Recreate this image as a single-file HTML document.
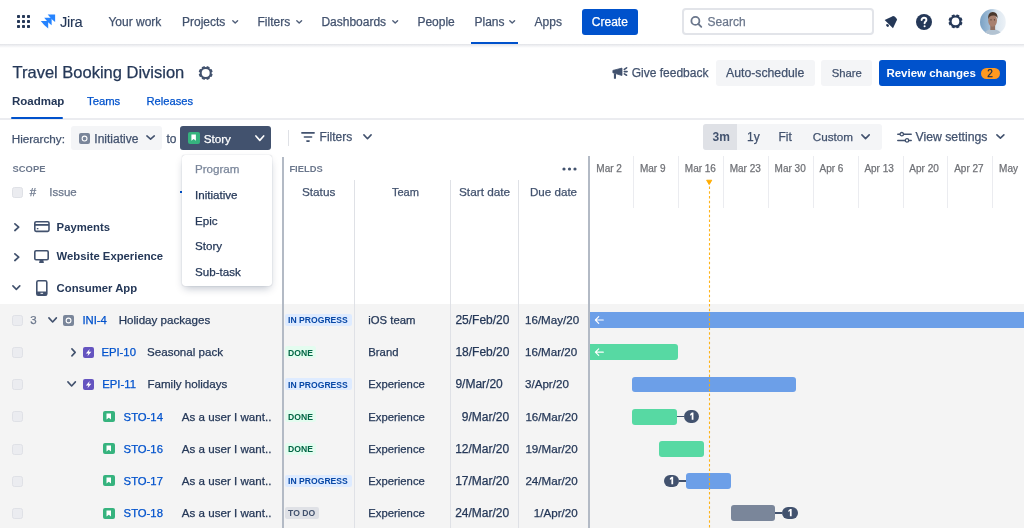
<!DOCTYPE html>
<html><head><meta charset="utf-8">
<style>
*{box-sizing:border-box;margin:0;padding:0}
html,body{width:1024px;height:528px;overflow:hidden;background:#fff;font-family:"Liberation Sans",sans-serif;color:#172B4D}
.a{position:absolute;white-space:nowrap}
.t{position:absolute;white-space:nowrap;line-height:1}
.s{-webkit-text-stroke:0.25px currentColor}
svg{position:absolute;overflow:visible}
</style></head><body>
<div id="root" style="position:absolute;left:0;top:0;width:1024px;height:528px;background:#fff;will-change:transform;overflow:hidden">
<div class="a" style="left:0px;top:44px;width:1024px;height:3.5px;background:linear-gradient(to bottom,#E1E3E7 0,#EDEEF1 35%,#FAFAFB 80%,#fff 100%);"></div>
<svg style="left:17px;top:15.2px" width="13" height="13"><g fill="#253858"><rect x="0" y="0" width="3" height="3" rx=".7"/><rect x="5" y="0" width="3" height="3" rx=".7"/><rect x="10" y="0" width="3" height="3" rx=".7"/><rect x="0" y="5" width="3" height="3" rx=".7"/><rect x="5" y="5" width="3" height="3" rx=".7"/><rect x="10" y="5" width="3" height="3" rx=".7"/><rect x="0" y="10" width="3" height="3" rx=".7"/><rect x="5" y="10" width="3" height="3" rx=".7"/><rect x="10" y="10" width="3" height="3" rx=".7"/></g></svg>
<svg style="left:41px;top:14.2px" width="15" height="15" viewBox="0 0 15 15"><path d="M6.7 0.4 h7.4 v7.6 Q10.100000000000001 5.0 6.7 0.4 z" fill="#2684FF"/><path d="M3.1999999999999997 3.7 h7.4 v7.6 Q6.6 8.3 3.1999999999999997 3.7 z" fill="#2684FF"/><path d="M-0.2 7.0 h7.4 v7.6 Q3.2 11.6 -0.2 7.0 z" fill="#2684FF"/></svg>
<div class="t s" style="left:60px;top:15px;font-size:14.7px;font-weight:400;color:#253858;letter-spacing:-0.3px;-webkit-text-stroke:0.1px currentColor">Jira</div>
<div class="t s" style="left:108.4px;top:16px;font-size:12px;font-weight:400;color:#42526E;">Your work</div>
<div class="t s" style="left:182px;top:16px;font-size:12px;font-weight:400;color:#42526E;">Projects</div>
<div class="t s" style="left:257.5px;top:16px;font-size:12px;font-weight:400;color:#42526E;">Filters</div>
<div class="t s" style="left:321.4px;top:16px;font-size:12px;font-weight:400;color:#42526E;">Dashboards</div>
<div class="t s" style="left:417.4px;top:16px;font-size:12px;font-weight:400;color:#42526E;">People</div>
<div class="t s" style="left:474.5px;top:16px;font-size:12px;font-weight:400;color:#42526E;">Plans</div>
<div class="t s" style="left:534.6px;top:16px;font-size:12px;font-weight:400;color:#42526E;">Apps</div>
<svg style="left:231.6px;top:20px" width="6.4" height="4" viewBox="0 0 6.4 4"><path d="M0.8 0.8L3.2 3.1L5.6 0.8" fill="none" stroke="#505F79" stroke-width="1.4" stroke-linecap="round" stroke-linejoin="round"/></svg>
<svg style="left:296px;top:20px" width="6.4" height="4" viewBox="0 0 6.4 4"><path d="M0.8 0.8L3.2 3.1L5.6 0.8" fill="none" stroke="#505F79" stroke-width="1.4" stroke-linecap="round" stroke-linejoin="round"/></svg>
<svg style="left:391.5px;top:20px" width="6.4" height="4" viewBox="0 0 6.4 4"><path d="M0.8 0.8L3.2 3.1L5.6 0.8" fill="none" stroke="#505F79" stroke-width="1.4" stroke-linecap="round" stroke-linejoin="round"/></svg>
<svg style="left:509px;top:20px" width="6.4" height="4" viewBox="0 0 6.4 4"><path d="M0.8 0.8L3.2 3.1L5.6 0.8" fill="none" stroke="#505F79" stroke-width="1.4" stroke-linecap="round" stroke-linejoin="round"/></svg>
<div class="a" style="left:471px;top:41.5px;width:47px;height:2.5px;background:#0052CC;"></div>
<div class="a" style="left:581.5px;top:9px;width:56px;height:25.5px;background:#0052CC;border-radius:3px"></div>
<div class="t s" style="left:591.8px;top:16px;font-size:12px;font-weight:400;color:#fff;">Create</div>
<div class="a" style="left:682px;top:8px;width:192px;height:26.8px;background:#fff;border:2px solid #E2E4E9;border-radius:4px"></div>
<svg style="left:0;top:0" width="1024" height="60"><circle cx="695.4" cy="20.9" r="4.0" fill="none" stroke="#6B778C" stroke-width="1.8"/><path d="M698.4 24l2.9 2.8" stroke="#6B778C" stroke-width="1.8" stroke-linecap="round"/></svg>
<div class="t s" style="left:707.6px;top:16px;font-size:12px;font-weight:400;color:#6B778C;">Search</div>
<svg style="left:884px;top:14px" width="15" height="15" viewBox="0 0 15 15"><g transform="rotate(45 7.5 7.5)" fill="#253858"><path d="M4.2 4 Q4.2 1.8 6.3 1.8 H8.7 Q10.8 1.8 10.8 4 L13.4 11.3 H1.6 Z"/><ellipse cx="7.5" cy="13.1" rx="1.6" ry="1.2"/></g></svg>
<svg style="left:915.8px;top:13.8px" width="16" height="16" viewBox="0 0 16 16"><circle cx="8" cy="8" r="8" fill="#253858"/><path d="M5.6 6.1c0-1.4 1.1-2.3 2.4-2.3s2.4.9 2.4 2.1c0 1.5-1.8 1.7-1.8 3.3" fill="none" stroke="#fff" stroke-width="1.9" stroke-linecap="round"/><circle cx="8.6" cy="12.2" r="1.05" fill="#fff"/></svg>
<svg style="left:0;top:0" width="1024" height="60"><circle cx="955.5" cy="21.4" r="6.0" fill="#253858"/><rect x="953.9" y="14.399999999999999" width="3.2" height="7.0" rx="0.6" fill="#253858" transform="rotate(22.5 955.5 21.4)"/><rect x="953.9" y="14.399999999999999" width="3.2" height="7.0" rx="0.6" fill="#253858" transform="rotate(67.5 955.5 21.4)"/><rect x="953.9" y="14.399999999999999" width="3.2" height="7.0" rx="0.6" fill="#253858" transform="rotate(112.5 955.5 21.4)"/><rect x="953.9" y="14.399999999999999" width="3.2" height="7.0" rx="0.6" fill="#253858" transform="rotate(157.5 955.5 21.4)"/><rect x="953.9" y="14.399999999999999" width="3.2" height="7.0" rx="0.6" fill="#253858" transform="rotate(202.5 955.5 21.4)"/><rect x="953.9" y="14.399999999999999" width="3.2" height="7.0" rx="0.6" fill="#253858" transform="rotate(247.5 955.5 21.4)"/><rect x="953.9" y="14.399999999999999" width="3.2" height="7.0" rx="0.6" fill="#253858" transform="rotate(292.5 955.5 21.4)"/><rect x="953.9" y="14.399999999999999" width="3.2" height="7.0" rx="0.6" fill="#253858" transform="rotate(337.5 955.5 21.4)"/><circle cx="955.5" cy="21.4" r="3.8" fill="#fff"/></svg>
<svg style="left:980px;top:9px" width="26" height="26" viewBox="0 0 26 26"><defs><clipPath id="av"><circle cx="12.9" cy="12.9" r="12.9"/></clipPath>
<linearGradient id="avbg" x1="0" y1="0" x2="1" y2="0"><stop offset="0" stop-color="#7aa1c4"/><stop offset="0.35" stop-color="#9dbbd6"/><stop offset="0.62" stop-color="#dbe6ef"/><stop offset="1" stop-color="#edf2f7"/></linearGradient></defs>
<g clip-path="url(#av)"><rect width="26" height="26" fill="url(#avbg)"/>
<path d="M3 26 Q5.5 20.5 12.5 20 Q19.5 20.5 22.5 26 Z" fill="#b3c3d2"/>
<rect x="10.3" y="15.5" width="4.8" height="5.5" fill="#8f6f61"/>
<ellipse cx="12.6" cy="11.6" rx="4.4" ry="6.1" fill="#a7806f"/>
<path d="M8 10.5 Q7.6 3.2 12.8 3 Q18 3 17.6 10 Q17 6.4 13.2 6.5 Q9.2 6.6 8 10.5z" fill="#4a382d"/>
<circle cx="11" cy="10.8" r=".6" fill="#3b2c25"/><circle cx="14.4" cy="10.8" r=".6" fill="#3b2c25"/>
</g></svg>
<div class="t s" style="left:12.5px;top:64px;font-size:16.5px;font-weight:400;color:#253858;">Travel Booking Division</div>
<svg style="left:0;top:0" width="300" height="100"><circle cx="205.7" cy="73.0" r="6.0" fill="#42526E"/><rect x="204.1" y="66.0" width="3.2" height="7.0" rx="0.6" fill="#42526E" transform="rotate(22.5 205.7 73.0)"/><rect x="204.1" y="66.0" width="3.2" height="7.0" rx="0.6" fill="#42526E" transform="rotate(67.5 205.7 73.0)"/><rect x="204.1" y="66.0" width="3.2" height="7.0" rx="0.6" fill="#42526E" transform="rotate(112.5 205.7 73.0)"/><rect x="204.1" y="66.0" width="3.2" height="7.0" rx="0.6" fill="#42526E" transform="rotate(157.5 205.7 73.0)"/><rect x="204.1" y="66.0" width="3.2" height="7.0" rx="0.6" fill="#42526E" transform="rotate(202.5 205.7 73.0)"/><rect x="204.1" y="66.0" width="3.2" height="7.0" rx="0.6" fill="#42526E" transform="rotate(247.5 205.7 73.0)"/><rect x="204.1" y="66.0" width="3.2" height="7.0" rx="0.6" fill="#42526E" transform="rotate(292.5 205.7 73.0)"/><rect x="204.1" y="66.0" width="3.2" height="7.0" rx="0.6" fill="#42526E" transform="rotate(337.5 205.7 73.0)"/><circle cx="205.7" cy="73.0" r="4.0" fill="#fff"/></svg>
<div class="t" style="left:12px;top:96px;font-size:11.5px;font-weight:700;color:#253858;">Roadmap</div>
<div class="t s" style="left:87px;top:96px;font-size:11.3px;font-weight:400;color:#0052CC;">Teams</div>
<div class="t s" style="left:146.5px;top:96px;font-size:11.2px;font-weight:400;color:#0052CC;">Releases</div>
<div class="a" style="left:0px;top:118px;width:1024px;height:2px;background:#EBECF0;"></div>
<div class="a" style="left:11.3px;top:116.9px;width:51.7px;height:2.1px;background:#0052CC;border-radius:1px"></div>
<svg style="left:608px;top:62px" width="24" height="20" viewBox="0 0 24 20"><path d="M4.9 8.4L14 6.1v7.4L4.9 10.8z" fill="#42526E" stroke="#42526E" stroke-width="0.8" stroke-linejoin="round"/><rect x="5.9" y="11.5" width="2.1" height="5.3" rx="0.5" fill="#42526E"/><path d="M16.3 7.3l2.3-1.5M16.3 9.6h2.8M16.3 11.9l2.3 1.3" stroke="#42526E" stroke-width="1.6" stroke-linecap="round"/></svg>
<div class="t s" style="left:631.7px;top:67px;font-size:12px;font-weight:400;color:#42526E;">Give feedback</div>
<div class="a" style="left:715.7px;top:60.1px;width:99.2px;height:25.7px;background:#F4F5F7;border-radius:3px"></div>
<div class="t s" style="left:726px;top:67px;font-size:12.25px;font-weight:400;color:#42526E;">Auto-schedule</div>
<div class="a" style="left:821.2px;top:60.3px;width:51px;height:25.4px;background:#F4F5F7;border-radius:3px"></div>
<div class="t s" style="left:831.7px;top:68px;font-size:11.3px;font-weight:400;color:#42526E;">Share</div>
<div class="a" style="left:879.2px;top:59.8px;width:126.4px;height:25.8px;background:#0052CC;border-radius:3px"></div>
<div class="t" style="left:886.4px;top:68px;font-size:11.5px;font-weight:700;color:#fff;">Review changes</div>
<div class="a" style="left:980.5px;top:67.6px;width:19.2px;height:11.4px;background:#FF991F;border-radius:6px"></div>
<div class="t s" style="left:987.3px;top:69px;font-size:10px;font-weight:400;color:#172B4D;">2</div>
<div class="t s" style="left:11.7px;top:133px;font-size:11.7px;font-weight:400;color:#42526E;">Hierarchy:</div>
<div class="a" style="left:70.7px;top:126px;width:91px;height:23.7px;background:#F4F5F7;border-radius:3px"></div>
<div class="a" style="left:78.7px;top:132.5px;width:11.1px;height:11.1px;background:#7A869A;border-radius:2px"></div>
<svg style="left:78.7px;top:132.5px" width="11.1" height="11.1"><circle cx="5.55" cy="5.55" r="2.4" fill="none" stroke="#fff" stroke-width="1.1"/></svg>
<div class="t s" style="left:94.3px;top:133px;font-size:12px;font-weight:400;color:#42526E;">Initiative</div>
<svg style="left:145.5px;top:135.4px" width="9.2" height="5" viewBox="0 0 9.2 5"><path d="M0.9 0.9L4.6 4.1L8.299999999999999 0.9" fill="none" stroke="#42526E" stroke-width="1.6" stroke-linecap="round" stroke-linejoin="round"/></svg>
<div class="t s" style="left:166.4px;top:133px;font-size:12px;font-weight:400;color:#42526E;">to</div>
<div class="a" style="left:180.1px;top:126.3px;width:91.3px;height:23.6px;background:#42526E;border-radius:3px"></div>
<div class="a" style="left:188.3px;top:132.4px;width:11.3px;height:11.3px;background:#36B37E;border-radius:2px"></div>
<svg style="left:188.3px;top:132.4px" width="11.3" height="11.3" viewBox="0 0 11.3 11.3"><path d="M3.4 2.6h4.5v6.2L5.65 7.1 3.4 8.8z" fill="#fff"/></svg>
<div class="t s" style="left:203.7px;top:133px;font-size:11.7px;font-weight:400;color:#fff;">Story</div>
<svg style="left:255px;top:134.9px" width="9.6" height="6.3" viewBox="0 0 9.6 6.3"><path d="M0.9 0.9L4.8 5.3999999999999995L8.7 0.9" fill="none" stroke="#fff" stroke-width="1.6" stroke-linecap="round" stroke-linejoin="round"/></svg>
<div class="a" style="left:288px;top:129.8px;width:1.2px;height:16px;background:#DFE1E6;"></div>
<svg style="left:300.7px;top:132px" width="14" height="10" viewBox="0 0 14 10"><path d="M0.9 0.9h12.2M3.4 5h7.2M5.9 9.1h2.2" stroke="#42526E" stroke-width="1.6" stroke-linecap="round"/></svg>
<div class="t s" style="left:319.6px;top:131px;font-size:12px;font-weight:400;color:#42526E;">Filters</div>
<svg style="left:363.3px;top:134px" width="9" height="5.6" viewBox="0 0 9 5.6"><path d="M0.9 0.9L4.5 4.699999999999999L8.1 0.9" fill="none" stroke="#42526E" stroke-width="1.6" stroke-linecap="round" stroke-linejoin="round"/></svg>
<div class="a" style="left:702.8px;top:124.2px;width:179.2px;height:25.5px;background:#F4F5F7;border-radius:3px"></div>
<div class="a" style="left:702.8px;top:124.2px;width:34.3px;height:25.5px;background:#DFE1E6;border-radius:3px 0 0 3px"></div>
<div class="t" style="left:712.6px;top:131px;font-size:12px;font-weight:700;color:#42526E;">3m</div>
<div class="t s" style="left:747px;top:131px;font-size:12px;font-weight:400;color:#42526E;">1y</div>
<div class="t s" style="left:778.5px;top:131px;font-size:12px;font-weight:400;color:#42526E;">Fit</div>
<div class="t s" style="left:812.8px;top:131px;font-size:11.7px;font-weight:400;color:#42526E;">Custom</div>
<svg style="left:860.7px;top:134.4px" width="9.1" height="5.5" viewBox="0 0 9.1 5.5"><path d="M0.9 0.9L4.55 4.6L8.2 0.9" fill="none" stroke="#42526E" stroke-width="1.6" stroke-linecap="round" stroke-linejoin="round"/></svg>
<svg style="left:896.5px;top:132px" width="15" height="11" viewBox="0 0 15 11"><path d="M0.8 2.2h13.4M0.8 8.4h13.4" stroke="#42526E" stroke-width="1.5" stroke-linecap="round"/><circle cx="4.8" cy="2.2" r="1.7" fill="#fff" stroke="#42526E" stroke-width="1.3"/><circle cx="10" cy="8.4" r="1.7" fill="#fff" stroke="#42526E" stroke-width="1.3"/></svg>
<div class="t s" style="left:915.5px;top:131px;font-size:12.25px;font-weight:400;color:#42526E;">View settings</div>
<svg style="left:996.3px;top:134.3px" width="8.8" height="5.1" viewBox="0 0 8.8 5.1"><path d="M0.9 0.9L4.4 4.199999999999999L7.9 0.9" fill="none" stroke="#42526E" stroke-width="1.6" stroke-linecap="round" stroke-linejoin="round"/></svg>
<div class="a" style="left:0px;top:304px;width:1024px;height:224px;background:#F4F4F4;"></div>
<div class="t" style="left:12.6px;top:164px;font-size:9.4px;font-weight:700;color:#6B778C;">SCOPE</div>
<div class="a" style="left:11.5px;top:186.5px;width:11px;height:11px;background:#EBECF0;border:1px solid #DFE1E6;border-radius:2.5px"></div>
<div class="t s" style="left:29.7px;top:187px;font-size:11.5px;font-weight:400;color:#6B778C;">#</div>
<div class="t s" style="left:49.2px;top:187px;font-size:11.5px;font-weight:400;color:#6B778C;">Issue</div>
<div class="a" style="left:180px;top:191px;width:2px;height:1.5px;background:#0052CC;"></div>
<div class="t" style="left:289.4px;top:164px;font-size:9.4px;font-weight:700;color:#6B778C;">FIELDS</div>
<svg style="left:562px;top:167px" width="15" height="4"><circle cx="2" cy="2" r="1.6" fill="#42526E"/><circle cx="7.5" cy="2" r="1.6" fill="#42526E"/><circle cx="13" cy="2" r="1.6" fill="#42526E"/></svg>
<div class="t s" style="left:301.9px;top:187px;font-size:11.8px;font-weight:400;color:#42526E;">Status</div>
<div class="t s" style="left:391.9px;top:187px;font-size:11.1px;font-weight:400;color:#42526E;">Team</div>
<div class="t s" style="left:459px;top:187px;font-size:11.8px;font-weight:400;color:#42526E;">Start date</div>
<div class="t s" style="left:530px;top:186px;font-size:11.6px;font-weight:400;color:#42526E;">Due date</div>
<div class="a" style="left:354px;top:180px;width:1px;height:348px;background:#DFE1E6;"></div>
<div class="a" style="left:450px;top:180px;width:1px;height:348px;background:#DFE1E6;"></div>
<div class="a" style="left:518px;top:180px;width:1px;height:348px;background:#DFE1E6;"></div>
<div class="a" style="left:633.1px;top:156px;width:1px;height:52px;background:#EBECF0;"></div>
<div class="a" style="left:678.0px;top:156px;width:1px;height:52px;background:#EBECF0;"></div>
<div class="a" style="left:722.9px;top:156px;width:1px;height:52px;background:#EBECF0;"></div>
<div class="a" style="left:767.8px;top:156px;width:1px;height:52px;background:#EBECF0;"></div>
<div class="a" style="left:812.7px;top:156px;width:1px;height:52px;background:#EBECF0;"></div>
<div class="a" style="left:857.6px;top:156px;width:1px;height:52px;background:#EBECF0;"></div>
<div class="a" style="left:902.5px;top:156px;width:1px;height:52px;background:#EBECF0;"></div>
<div class="a" style="left:947.4px;top:156px;width:1px;height:52px;background:#EBECF0;"></div>
<div class="a" style="left:992.3px;top:156px;width:1px;height:52px;background:#EBECF0;"></div>
<div class="a" style="left:282px;top:157px;width:2px;height:371px;background:#B3BAC5;"></div>
<div class="a" style="left:588px;top:156px;width:2px;height:372px;background:#B3BAC5;"></div>
<div class="t s" style="left:596.3px;top:164px;font-size:10px;font-weight:400;color:#707277;">Mar 2</div>
<div class="t s" style="left:639.9px;top:164px;font-size:10px;font-weight:400;color:#707277;">Mar 9</div>
<div class="t s" style="left:684.8px;top:164px;font-size:10px;font-weight:400;color:#707277;">Mar 16</div>
<div class="t s" style="left:729.7px;top:164px;font-size:10px;font-weight:400;color:#707277;">Mar 23</div>
<div class="t s" style="left:774.6px;top:164px;font-size:10px;font-weight:400;color:#707277;">Mar 30</div>
<div class="t s" style="left:819.5px;top:164px;font-size:10px;font-weight:400;color:#707277;">Apr 6</div>
<div class="t s" style="left:864.4px;top:164px;font-size:10px;font-weight:400;color:#707277;">Apr 13</div>
<div class="t s" style="left:909.3px;top:164px;font-size:10px;font-weight:400;color:#707277;">Apr 20</div>
<div class="t s" style="left:954.2px;top:164px;font-size:10px;font-weight:400;color:#707277;">Apr 27</div>
<div class="t s" style="left:999.1px;top:164px;font-size:10px;font-weight:400;color:#707277;">May</div>
<svg style="left:13.8px;top:223.3px" width="5.6" height="8.4" viewBox="0 0 5.6 8.4"><path d="M0.9 0.9L4.699999999999999 4.2L0.9 7.5" fill="none" stroke="#42526E" stroke-width="1.7" stroke-linecap="round" stroke-linejoin="round"/></svg>
<svg style="left:34px;top:221.4px" width="16" height="11.2" viewBox="0 0 16 11.2"><rect x="0.8" y="0.8" width="14.2" height="9.6" rx="1.3" fill="none" stroke="#42526E" stroke-width="1.6"/><rect x="0.8" y="3" width="14.2" height="1.8" fill="#42526E"/><rect x="2.8" y="7" width="1.6" height="1.3" fill="#42526E"/></svg>
<div class="t" style="left:56.6px;top:222px;font-size:11.3px;font-weight:700;color:#253858;">Payments</div>
<svg style="left:13.8px;top:252.6px" width="5.6" height="8.4" viewBox="0 0 5.6 8.4"><path d="M0.9 0.9L4.699999999999999 4.2L0.9 7.5" fill="none" stroke="#42526E" stroke-width="1.7" stroke-linecap="round" stroke-linejoin="round"/></svg>
<svg style="left:34.3px;top:249.5px" width="15" height="14" viewBox="0 0 15 14"><rect x="0.8" y="0.8" width="13.4" height="9" rx="1.2" fill="none" stroke="#42526E" stroke-width="1.6"/><path d="M5.8 9.6h3.4l0.7 3.4h-4.8z" fill="#42526E"/></svg>
<div class="t" style="left:56.6px;top:251px;font-size:11.3px;font-weight:700;color:#253858;">Website Experience</div>
<svg style="left:12px;top:285.2px" width="8.7" height="5.3" viewBox="0 0 8.7 5.3"><path d="M0.9 0.9L4.35 4.3999999999999995L7.799999999999999 0.9" fill="none" stroke="#42526E" stroke-width="1.6" stroke-linecap="round" stroke-linejoin="round"/></svg>
<svg style="left:36px;top:280px" width="12" height="16" viewBox="0 0 12 16"><rect x="0.8" y="0.8" width="10" height="14.4" rx="1.5" fill="none" stroke="#42526E" stroke-width="1.6"/><rect x="0.8" y="11.5" width="10" height="3.7" fill="#42526E"/><rect x="4.5" y="12.8" width="2.6" height="1" fill="#fff"/></svg>
<div class="t" style="left:56.6px;top:283px;font-size:11.3px;font-weight:700;color:#253858;">Consumer App</div>
<div class="a" style="left:11.5px;top:315.0px;width:11px;height:11px;background:#EBECF0;border:1px solid #DFE1E6;border-radius:2.5px"></div>
<div class="t s" style="left:30.2px;top:315px;font-size:11.5px;font-weight:400;color:#6B778C;">3</div>
<svg style="left:47.5px;top:317.0px" width="9.3" height="5.9" viewBox="0 0 9.3 5.9"><path d="M0.9 0.9L4.65 5.0L8.4 0.9" fill="none" stroke="#42526E" stroke-width="1.6" stroke-linecap="round" stroke-linejoin="round"/></svg>
<div class="a" style="left:62.7px;top:314.7px;width:11.1px;height:11px;background:#7A869A;border-radius:2px"></div>
<svg style="left:62.7px;top:314.7px" width="11.1" height="11"><circle cx="5.55" cy="5.5" r="2.4" fill="none" stroke="#fff" stroke-width="1.1"/></svg>
<div class="t s" style="left:82.4px;top:315px;font-size:11.3px;font-weight:400;color:#0052CC;">INI-4</div>
<div class="t s" style="left:118.7px;top:314px;font-size:11.6px;font-weight:400;color:#253858;">Holiday packages</div>
<div class="a" style="left:285.2px;top:314.0px;width:66.4px;height:12px;background:#DEEBFF;border-radius:2px"></div>
<div class="t" style="left:288.1px;top:316px;font-size:8.6px;font-weight:700;color:#0747A6;">IN PROGRESS</div>
<div class="t s" style="left:368.3px;top:315px;font-size:11.3px;font-weight:400;color:#253858;">iOS team</div>
<div class="t s" style="left:455.4px;top:314px;font-size:12px;font-weight:400;color:#253858;">25/Feb/20</div>
<div class="t s" style="left:525px;top:314px;font-size:11.6px;font-weight:400;color:#253858;">16/May/20</div>
<div class="a" style="left:11.5px;top:347.15px;width:11px;height:11px;background:#EBECF0;border:1px solid #DFE1E6;border-radius:2.5px"></div>
<svg style="left:70.8px;top:348.15px" width="5.1" height="8.8" viewBox="0 0 5.1 8.8"><path d="M0.9 0.9L4.199999999999999 4.4L0.9 7.9" fill="none" stroke="#42526E" stroke-width="1.6" stroke-linecap="round" stroke-linejoin="round"/></svg>
<div class="a" style="left:82.7px;top:346.85px;width:11.2px;height:11px;background:#6554C0;border-radius:2px"></div>
<svg style="left:82.7px;top:346.85px" width="11.2" height="11" viewBox="0 0 11 11"><path d="M6.6 1.9L2.8 6.4h2.5l-.9 2.9 3.9-4.6H5.8z" fill="#fff"/></svg>
<div class="t s" style="left:101.4px;top:347px;font-size:11.3px;font-weight:400;color:#0052CC;">EPI-10</div>
<div class="t s" style="left:147px;top:346px;font-size:11.6px;font-weight:400;color:#253858;">Seasonal pack</div>
<div class="a" style="left:285.2px;top:346.15px;width:31.2px;height:12px;background:#E3FCEF;border-radius:2px"></div>
<div class="t" style="left:288.1px;top:349px;font-size:8.6px;font-weight:700;color:#006644;">DONE</div>
<div class="t s" style="left:368.3px;top:347px;font-size:11.3px;font-weight:400;color:#253858;">Brand</div>
<div class="t s" style="left:455.4px;top:346px;font-size:12px;font-weight:400;color:#253858;">18/Feb/20</div>
<div class="t s" style="left:525px;top:346px;font-size:11.6px;font-weight:400;color:#253858;">16/Mar/20</div>
<div class="a" style="left:11.5px;top:379.3px;width:11px;height:11px;background:#EBECF0;border:1px solid #DFE1E6;border-radius:2.5px"></div>
<svg style="left:67px;top:381.3px" width="9.3" height="5.9" viewBox="0 0 9.3 5.9"><path d="M0.9 0.9L4.65 5.0L8.4 0.9" fill="none" stroke="#42526E" stroke-width="1.6" stroke-linecap="round" stroke-linejoin="round"/></svg>
<div class="a" style="left:82.7px;top:379.0px;width:11.2px;height:11px;background:#6554C0;border-radius:2px"></div>
<svg style="left:82.7px;top:379.0px" width="11.2" height="11" viewBox="0 0 11 11"><path d="M6.6 1.9L2.8 6.4h2.5l-.9 2.9 3.9-4.6H5.8z" fill="#fff"/></svg>
<div class="t s" style="left:102.3px;top:379px;font-size:11.3px;font-weight:400;color:#0052CC;">EPI-11</div>
<div class="t s" style="left:147.4px;top:378px;font-size:11.6px;font-weight:400;color:#253858;">Family holidays</div>
<div class="a" style="left:285.2px;top:378.3px;width:66.4px;height:12px;background:#DEEBFF;border-radius:2px"></div>
<div class="t" style="left:288.1px;top:381px;font-size:8.6px;font-weight:700;color:#0747A6;">IN PROGRESS</div>
<div class="t s" style="left:368.3px;top:379px;font-size:11.3px;font-weight:400;color:#253858;">Experience</div>
<div class="t s" style="left:455.4px;top:378px;font-size:12px;font-weight:400;color:#253858;">9/Mar/20</div>
<div class="t s" style="left:525px;top:378px;font-size:11.6px;font-weight:400;color:#253858;">3/Apr/20</div>
<div class="a" style="left:11.5px;top:411.45px;width:11px;height:11px;background:#EBECF0;border:1px solid #DFE1E6;border-radius:2.5px"></div>
<div class="a" style="left:103.3px;top:411.15px;width:11.5px;height:11px;background:#36B37E;border-radius:2px"></div>
<svg style="left:103.3px;top:411.15px" width="11.5" height="11" viewBox="0 0 11.5 11"><path d="M3.5 2.5h4.5v6L5.75 6.8 3.5 8.5z" fill="#fff"/></svg>
<div class="t s" style="left:123.6px;top:412px;font-size:11.3px;font-weight:400;color:#0052CC;">STO-14</div>
<div class="t s" style="left:181.8px;top:411px;font-size:11.6px;font-weight:400;color:#253858;">As a user I want..</div>
<div class="a" style="left:285.2px;top:410.45px;width:31.2px;height:12px;background:#E3FCEF;border-radius:2px"></div>
<div class="t" style="left:288.1px;top:413px;font-size:8.6px;font-weight:700;color:#006644;">DONE</div>
<div class="t s" style="left:368.3px;top:412px;font-size:11.3px;font-weight:400;color:#253858;">Experience</div>
<div class="t s" style="right:514.80px;top:411px;font-size:12px;font-weight:400;color:#253858">9/Mar/20</div>
<div class="t s" style="right:446.40px;top:411px;font-size:11.6px;font-weight:400;color:#253858">16/Mar/20</div>
<div class="a" style="left:11.5px;top:443.6px;width:11px;height:11px;background:#EBECF0;border:1px solid #DFE1E6;border-radius:2.5px"></div>
<div class="a" style="left:103.3px;top:443.3px;width:11.5px;height:11px;background:#36B37E;border-radius:2px"></div>
<svg style="left:103.3px;top:443.3px" width="11.5" height="11" viewBox="0 0 11.5 11"><path d="M3.5 2.5h4.5v6L5.75 6.8 3.5 8.5z" fill="#fff"/></svg>
<div class="t s" style="left:123.6px;top:444px;font-size:11.3px;font-weight:400;color:#0052CC;">STO-16</div>
<div class="t s" style="left:181.8px;top:443px;font-size:11.6px;font-weight:400;color:#253858;">As a user I want..</div>
<div class="a" style="left:285.2px;top:442.6px;width:31.2px;height:12px;background:#E3FCEF;border-radius:2px"></div>
<div class="t" style="left:288.1px;top:445px;font-size:8.6px;font-weight:700;color:#006644;">DONE</div>
<div class="t s" style="left:368.3px;top:444px;font-size:11.3px;font-weight:400;color:#253858;">Experience</div>
<div class="t s" style="right:514.80px;top:443px;font-size:12px;font-weight:400;color:#253858">12/Mar/20</div>
<div class="t s" style="right:446.40px;top:443px;font-size:11.6px;font-weight:400;color:#253858">19/Mar/20</div>
<div class="a" style="left:11.5px;top:475.75px;width:11px;height:11px;background:#EBECF0;border:1px solid #DFE1E6;border-radius:2.5px"></div>
<div class="a" style="left:103.3px;top:475.45px;width:11.5px;height:11px;background:#36B37E;border-radius:2px"></div>
<svg style="left:103.3px;top:475.45px" width="11.5" height="11" viewBox="0 0 11.5 11"><path d="M3.5 2.5h4.5v6L5.75 6.8 3.5 8.5z" fill="#fff"/></svg>
<div class="t s" style="left:123.6px;top:476px;font-size:11.3px;font-weight:400;color:#0052CC;">STO-17</div>
<div class="t s" style="left:181.8px;top:475px;font-size:11.6px;font-weight:400;color:#253858;">As a user I want..</div>
<div class="a" style="left:285.2px;top:474.75px;width:66.4px;height:12px;background:#DEEBFF;border-radius:2px"></div>
<div class="t" style="left:288.1px;top:477px;font-size:8.6px;font-weight:700;color:#0747A6;">IN PROGRESS</div>
<div class="t s" style="left:368.3px;top:476px;font-size:11.3px;font-weight:400;color:#253858;">Experience</div>
<div class="t s" style="right:514.80px;top:475px;font-size:12px;font-weight:400;color:#253858">17/Mar/20</div>
<div class="t s" style="right:446.40px;top:475px;font-size:11.6px;font-weight:400;color:#253858">24/Mar/20</div>
<div class="a" style="left:11.5px;top:507.9px;width:11px;height:11px;background:#EBECF0;border:1px solid #DFE1E6;border-radius:2.5px"></div>
<div class="a" style="left:103.3px;top:507.6px;width:11.5px;height:11px;background:#36B37E;border-radius:2px"></div>
<svg style="left:103.3px;top:507.6px" width="11.5" height="11" viewBox="0 0 11.5 11"><path d="M3.5 2.5h4.5v6L5.75 6.8 3.5 8.5z" fill="#fff"/></svg>
<div class="t s" style="left:123.6px;top:508px;font-size:11.3px;font-weight:400;color:#0052CC;">STO-18</div>
<div class="t s" style="left:181.8px;top:507px;font-size:11.6px;font-weight:400;color:#253858;">As a user I want..</div>
<div class="a" style="left:285.2px;top:506.9px;width:34px;height:12px;background:#DFE1E6;border-radius:2px"></div>
<div class="t" style="left:288.1px;top:509px;font-size:8.6px;font-weight:700;color:#42526E;">TO DO</div>
<div class="t s" style="left:368.3px;top:508px;font-size:11.3px;font-weight:400;color:#253858;">Experience</div>
<div class="t s" style="right:514.80px;top:507px;font-size:12px;font-weight:400;color:#253858">24/Mar/20</div>
<div class="t s" style="right:446.40px;top:507px;font-size:11.6px;font-weight:400;color:#253858">1/Apr/20</div>
<div class="a" style="left:590px;top:312.3px;width:434px;height:15.8px;background:#6C9FE8;border-radius:0px 0px 0px 0px"></div>
<svg style="left:0;top:0" width="1024" height="528"><path d="M603.3 320.00H595.6M598.7 316.70L595.4 320.00L598.7 323.30" fill="none" stroke="#fff" stroke-width="1.15" stroke-linecap="round" stroke-linejoin="round"/></svg>
<div class="a" style="left:590px;top:344.45px;width:87.8px;height:15.8px;background:#57D9A3;border-radius:0px 3px 3px 0px"></div>
<svg style="left:0;top:0" width="1024" height="528"><path d="M603.3 352.15H595.6M598.7 348.85L595.4 352.15L598.7 355.45" fill="none" stroke="#fff" stroke-width="1.15" stroke-linecap="round" stroke-linejoin="round"/></svg>
<div class="a" style="left:631.8px;top:376.6px;width:164.6px;height:15.8px;background:#6C9FE8;border-radius:3px 3px 3px 3px"></div>
<div class="a" style="left:631.9px;top:408.75px;width:45.3px;height:15.8px;background:#57D9A3;border-radius:3px 3px 3px 3px"></div>
<div class="a" style="left:677px;top:415.85px;width:7px;height:1.6px;background:#42526E;"></div>
<div class="a" style="left:683.8px;top:410.25px;width:15.6px;height:12.8px;background:#42526E;border-radius:7px"></div>
<svg style="left:0;top:0" width="1024" height="528"><path d="M691.90 412.55h1.55v7.3h-1.75v-5.2l-1.5 1v-1.7z" fill="#fff"/></svg>
<div class="a" style="left:659.2px;top:440.9px;width:45.0px;height:15.8px;background:#57D9A3;border-radius:3px 3px 3px 3px"></div>
<div class="a" style="left:679px;top:480.15px;width:7px;height:1.6px;background:#42526E;"></div>
<div class="a" style="left:663.5px;top:474.55px;width:15.6px;height:12.8px;background:#42526E;border-radius:7px"></div>
<svg style="left:0;top:0" width="1024" height="528"><path d="M671.60 476.85h1.55v7.3h-1.75v-5.2l-1.5 1v-1.7z" fill="#fff"/></svg>
<div class="a" style="left:685.9px;top:473.05px;width:44.8px;height:15.8px;background:#6C9FE8;border-radius:3px 3px 3px 3px"></div>
<div class="a" style="left:731px;top:505.2px;width:44.2px;height:15.8px;background:#7A869A;border-radius:3px 3px 3px 3px"></div>
<div class="a" style="left:775px;top:512.3px;width:7px;height:1.6px;background:#42526E;"></div>
<div class="a" style="left:782px;top:506.7px;width:15.6px;height:12.8px;background:#42526E;border-radius:7px"></div>
<svg style="left:0;top:0" width="1024" height="528"><path d="M790.10 509.00h1.55v7.3h-1.75v-5.2l-1.5 1v-1.7z" fill="#fff"/></svg>
<svg style="left:0;top:0" width="1024" height="528"><line x1="709.5" y1="186.6" x2="709.5" y2="528" stroke="#FFAB00" stroke-opacity="0.9" stroke-width="1.1" stroke-dasharray="2.5 2.2"/><path d="M706.6 180.2h5.2L709.2 184.6z" fill="#FFAB00" stroke="#FFAB00" stroke-width="0.9" stroke-linejoin="round"/></svg>
<div class="a" style="left:182px;top:155px;width:89.8px;height:131px;background:#fff;border-radius:3px;box-shadow:0 4px 8px -2px rgba(9,30,66,0.28),0 0 1px rgba(9,30,66,0.32)"></div>
<div class="t s" style="left:195px;top:163px;font-size:11.6px;font-weight:400;color:#7A869A;">Program</div>
<div class="t s" style="left:195px;top:189px;font-size:11.6px;font-weight:400;color:#253858;">Initiative</div>
<div class="t s" style="left:195px;top:215px;font-size:11.6px;font-weight:400;color:#253858;">Epic</div>
<div class="t s" style="left:195px;top:240px;font-size:11.6px;font-weight:400;color:#253858;">Story</div>
<div class="t s" style="left:195px;top:266px;font-size:11.6px;font-weight:400;color:#253858;">Sub-task</div>
</div>
</body></html>
